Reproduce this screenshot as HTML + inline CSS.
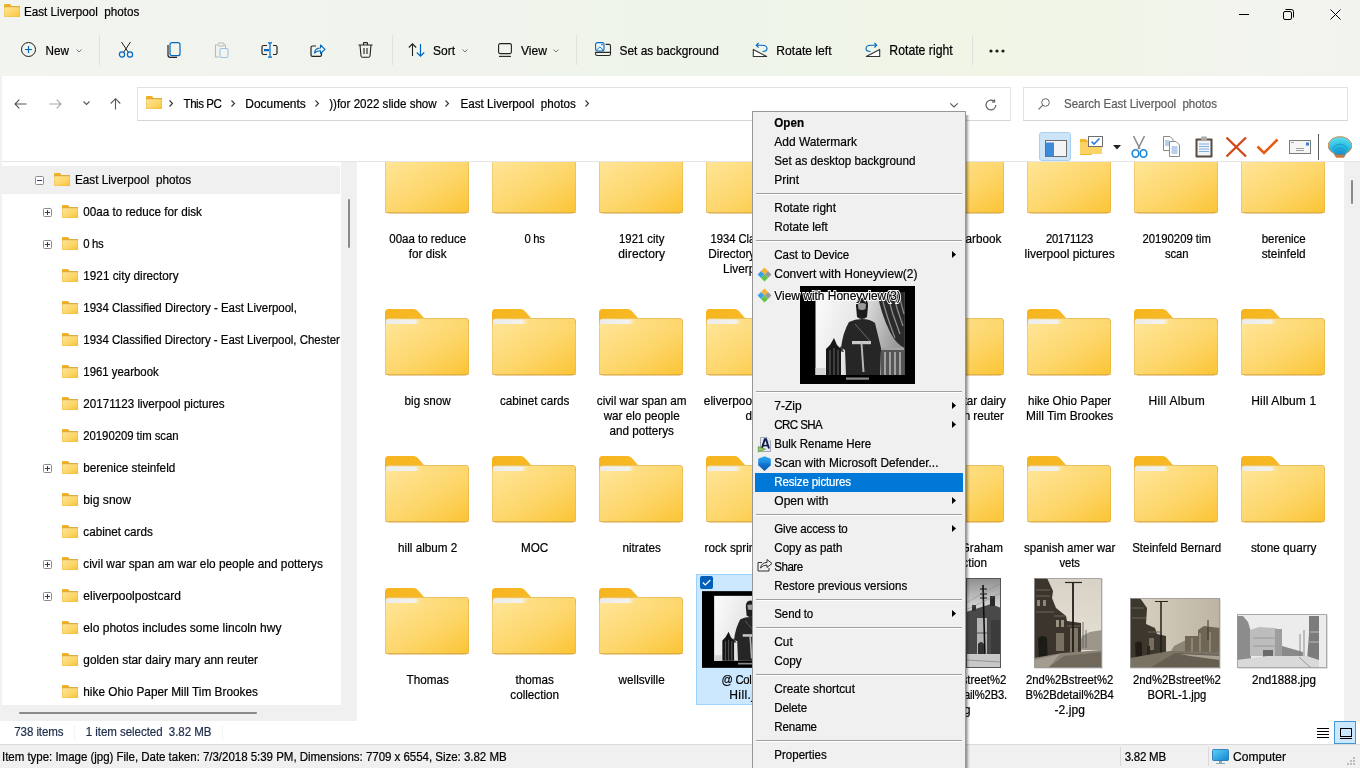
<!DOCTYPE html>
<html><head><meta charset="utf-8"><title>East Liverpool photos</title>
<style>
html,body{margin:0;padding:0;width:1360px;height:768px;overflow:hidden;background:#fff;}
body{position:relative;font-family:"Liberation Sans",sans-serif;}
.t{position:absolute;white-space:pre;font-family:"Liberation Sans",sans-serif;transform:scaleY(1.12);transform-origin:0 14px;-webkit-text-stroke:0.2px currentColor;}
svg{overflow:visible}
</style></head><body>
<svg width="0" height="0" style="position:absolute">
<defs>
<linearGradient id="gFront" x1="0" y1="0" x2="1" y2="1">
<stop offset="0" stop-color="#ffe597"/><stop offset="0.55" stop-color="#fdd66a"/><stop offset="1" stop-color="#fbc435"/>
</linearGradient>
<linearGradient id="gTab" x1="0" y1="0" x2="1" y2="0">
<stop offset="0" stop-color="#f6b51f"/><stop offset="1" stop-color="#f9bd2c"/>
</linearGradient>
<linearGradient id="gPaper" x1="0" y1="0" x2="1" y2="0">
<stop offset="0" stop-color="#ececec"/><stop offset="0.8" stop-color="#f2f2f0"/><stop offset="1" stop-color="#fde59d" stop-opacity="0"/>
</linearGradient>
<symbol id="folder" viewBox="0 0 84 67">
<path d="M3.5,0 H28.5 Q31,0 32.6,1.8 L39,9 H80 V14 H0 V3.5 Q0,0 3.5,0 Z" fill="url(#gTab)"/>
<rect x="0" y="9" width="84" height="57.4" rx="3.8" fill="#d7a443"/>
<rect x="0.6" y="9.5" width="82.8" height="56.2" rx="3.3" fill="url(#gFront)"/>
<path d="M1.2,11.8 Q1.4,10.6 3,10.6 H37 L35,16 H1.2 Z" fill="url(#gPaper)"/>
<path d="M0.6,15 H83.4 V62.4 Q83.4,65.6 80.1,65.6 H3.9 Q0.6,65.6 0.6,62.4 Z" fill="url(#gFront)"/>
<rect x="0" y="65.2" width="84" height="0.9" rx="0.4" fill="#cf9c3c" opacity="0.7"/>
</symbol>
<symbol id="sfolder" viewBox="0 0 16 13">
<path d="M1,0 H6 L7.5,2 H16 V4 H0 V1 Q0,0 1,0 Z" fill="#f1b11d"/>
<rect x="0" y="2" width="16" height="11" rx="1" fill="#e0aa3e"/>
<rect x="0.3" y="3.2" width="15.4" height="9.5" rx="0.8" fill="url(#gFront)"/>
</symbol>

<filter id="soft" x="-5%" y="-5%" width="110%" height="110%"><feGaussianBlur stdDeviation="0.45"/></filter>
<linearGradient id="gSol" x1="0" y1="0" x2="1" y2="0.3">
<stop offset="0" stop-color="#fdfdfd"/><stop offset="0.5" stop-color="#e6e6e6"/><stop offset="1" stop-color="#9a9a9a"/>
</linearGradient>
<symbol id="soldier" viewBox="0 0 115 98">
<rect width="115" height="98" fill="#000"/>
<g filter="url(#soft)">
<rect x="15.5" y="6" width="89" height="83" fill="url(#gSol)"/>
<path d="M77,6 H104.5 V62 Q96,58 90,46 Q81,28 77,6 Z" fill="#2c2c2c"/>
<path d="M81,8 Q87,32 95,52 M87,7 Q92,28 100,48 M93,7 Q97,24 103,40 M99,7 Q101,18 104,28" stroke="#8f8f8f" stroke-width="1.2" fill="none"/>
<rect x="77" y="62" width="27.5" height="27" fill="#555"/>
<path d="M80,66 V89 M85,66 V89 M90,66 V89 M95,66 V89 M100,66 V89" stroke="#c0c0c0" stroke-width="1.4"/>
<path d="M78,63 H104" stroke="#d8d8d8" stroke-width="1.2"/>
<path d="M56,20 Q56,12 62,12 Q68,12 68,20 L67,31 Q62,35 57,31 Z" fill="#1e1e1e"/>
<path d="M58,18 Q62,16 66,18 L65.5,23 Q62,25 58.5,23 Z" fill="#9a9a9a"/>
<path d="M49,36 Q55,33 62,33 Q70,33 75,37 L81,62 L80,89 H46 L45,64 L41,62 Q43,46 49,36 Z" fill="#262626"/>
<path d="M41,60 L38,65 L44,66 Z" fill="#3a3a3a"/>
<rect x="52" y="55" width="19" height="3.2" fill="#c8c8c8"/>
<path d="M61.5,57 L63.5,86" stroke="#b5b5b5" stroke-width="2"/>
<path d="M55,38 L70,55" stroke="#6a6a6a" stroke-width="1"/>
<path d="M34,52 L37,59 L41,63 L41,89 H26 L26,63 L30,59 Z" fill="#181818"/>
<path d="M30,64 V89 M34,62 V89 M38,64 V89" stroke="#7a7a7a" stroke-width="0.8"/>
<rect x="15.5" y="82" width="10" height="7" fill="#d5d5d5"/>
</g>
<rect x="46" y="91.5" width="23" height="2.2" fill="#8a8a8a"/>
</symbol>

<linearGradient id="gSky1" x1="0" y1="0" x2="0" y2="1">
<stop offset="0" stop-color="#d8d2c6"/><stop offset="1" stop-color="#e8e3d9"/>
</linearGradient>
<symbol id="photo7" viewBox="0 0 68 90">
<g filter="url(#soft)">
<rect width="68" height="90" fill="url(#gSky1)"/>
<path d="M48,58 L56,54 L68,52 V72 H44 Z" fill="#9c958a"/>
<path d="M0,0 H13 L19,13 L18,20 L22,30 L32,38 L33,43 L47,45 V75 L30,78 L0,82 Z" fill="#3a352e"/>
<path d="M2,12 H16 M2,18 H16 M2,34 H20 M20,38 H31 M33,48 H46" stroke="#6f6658" stroke-width="1.2"/>
<rect x="3" y="22" width="3" height="6" fill="#8f8676"/><rect x="9" y="22" width="3" height="6" fill="#8f8676"/>
<rect x="22" y="42" width="3" height="7" fill="#9a9180"/><rect x="27" y="42" width="3" height="7" fill="#9a9180"/>
<rect x="22" y="55" width="8" height="18" fill="#786f60"/>
<rect x="36" y="50" width="8" height="24" fill="#7e7566"/>
<path d="M39,4 V74" stroke="#1f1c18" stroke-width="1.8"/><path d="M31,4.5 H48" stroke="#2a2620" stroke-width="1.2"/>
<path d="M49,44 V70 M52,52 V70" stroke="#555" stroke-width="0.8"/>
<path d="M4,60 Q9,56 13,60 L14,87 H5 Z" fill="#1f1c18"/>
<path d="M0,80 L28,75 L68,72 V90 H0 Z" fill="#8a8274"/>
<path d="M30,78 L68,74 V90 H14 Z" fill="#6f675a"/>
<path d="M0,82 L26,76 L14,90 H0 Z" fill="#a49c8e"/>
</g>
<rect x="0.5" y="0.5" width="67" height="89" fill="none" stroke="#9a9a9a" stroke-width="1" opacity="0.8"/>
</symbol>

<linearGradient id="gSky2" x1="0" y1="0" x2="1" y2="0">
<stop offset="0" stop-color="#d9d2c2"/><stop offset="1" stop-color="#bdb4a3"/>
</linearGradient>
<symbol id="photo8" viewBox="0 0 90 70">
<g filter="url(#soft)">
<rect width="90" height="70" fill="url(#gSky2)"/>
<path d="M44,48 L56,42 L90,40 V55 H40 Z" fill="#8d8474"/>
<path d="M55,38 H68 V32 L74,28 L90,30 V56 H55 Z" fill="#6f6656"/>
<path d="M62,40 V55 M70,35 V55 M80,34 V55" stroke="#9a907f" stroke-width="1.5"/>
<path d="M78,22 V42" stroke="#3a342c" stroke-width="1"/>
<path d="M0,0 H10 L17,10 L16,26 L25,30 L27,36 L36,38 V55 L0,62 Z" fill="#3d372f"/>
<path d="M2,10 H14 M2,20 H16 M18,34 H30" stroke="#6e6556" stroke-width="1.1"/>
<rect x="19" y="40" width="5" height="12" fill="#786e5f"/>
<path d="M31,3 V56" stroke="#221e19" stroke-width="1.5"/><path d="M25,3.5 H38" stroke="#2a2620" stroke-width="1"/>
<path d="M5,45 Q9,42 12,45 L12,64 H6 Z" fill="#221e19"/>
<path d="M17,48 L20,48 L20,60 L17,60 Z" fill="#2a2620"/>
<path d="M0,60 L40,53 L90,54 V70 H0 Z" fill="#7a7264"/>
<path d="M20,70 L45,55 L90,57 V70 Z" fill="#665e51"/>
<path d="M50,56 L90,58 V62 L60,58 Z" fill="#aaa192"/>
</g>
<rect x="0.5" y="0.5" width="89" height="69" fill="none" stroke="#9a9a9a" stroke-width="1" opacity="0.8"/>
</symbol>

<linearGradient id="gSky6" x1="0" y1="0" x2="0" y2="1">
<stop offset="0" stop-color="#8e8e8e"/><stop offset="0.3" stop-color="#d0d0d0"/><stop offset="1" stop-color="#e6e6e6"/>
</linearGradient>
<symbol id="photo6" viewBox="0 0 35 90">
<g filter="url(#soft)">
<rect width="35" height="90" fill="url(#gSky6)"/>
<path d="M0,34 L25,26 L35,30 V78 H0 Z" fill="#4a4a4a"/>
<rect x="24" y="18" width="5" height="10" fill="#2a2a2a"/>
<rect x="6" y="27" width="4" height="6" fill="#333"/>
<rect x="11" y="40" width="10" height="36" fill="#b5b5b5"/>
<path d="M11,55 H21" stroke="#555" stroke-width="1"/>
<rect x="25" y="42" width="9" height="34" fill="#3a3a3a"/>
<path d="M17,7 L19,80" stroke="#111" stroke-width="1.6"/>
<path d="M14,11 H21 M14,16 H21 M14,20 H21" stroke="#111" stroke-width="1"/>
<path d="M0,25 L35,5 M0,32 L35,15" stroke="#777" stroke-width="0.4"/>
<path d="M12,66 Q15,62 18,66 V78 H12 Z" fill="#333"/>
<rect x="0" y="76" width="35" height="14" fill="#c8c8c8"/>
<path d="M0,82 L35,84" stroke="#888" stroke-width="0.8"/>
</g>
<rect x="0.5" y="0.5" width="34" height="89" fill="none" stroke="#555" stroke-width="1"/>
</symbol>

<symbol id="photo9" viewBox="0 0 90 54">
<g filter="url(#soft)">
<rect width="90" height="54" fill="#ececec"/>
<path d="M0,2 H6 L11,8 L14,18 V46 L0,48 Z" fill="#8c8c8c"/>
<path d="M13,16 L22,13 L38,14 L44,16 V42 H13 Z" fill="#bdbdbd"/>
<path d="M16,24 H42 M16,32 H42" stroke="#999" stroke-width="1"/>
<rect x="38" y="15" width="7" height="28" fill="#9e9e9e"/>
<path d="M45,32 L52,34 L66,38 V42 H45 Z" fill="#8a8a8a"/>
<path d="M26,36 H36 V44 H26 Z" fill="#6a6a6a"/>
<path d="M72,2 H82 V46 H70 L72,20 Z" fill="#7c7c7c"/>
<path d="M73,18 H82 M72,28 H82" stroke="#bbb" stroke-width="1.2"/>
<path d="M67,16 V44 M63,20 V44" stroke="#777" stroke-width="0.8"/>
<path d="M0,46 L30,42 L70,42 L82,46 V54 H0 Z" fill="#d9d9d9"/>
<path d="M62,43 L74,54" stroke="#999" stroke-width="1"/>
</g>
<rect x="0.5" y="0.5" width="89" height="53" fill="none" stroke="#9a9a9a" stroke-width="1" opacity="0.8"/>
</symbol>
</defs></svg>

<div style="position:absolute;left:0;top:0;width:1360px;height:76px;background:linear-gradient(90deg,#f2f4ef 0%,#f1f4ed 30%,#eef4ea 55%,#f1f5e6 72%,#f1f5e8 82%,#f2f4ee 92%,#f2f3ef 100%);"></div>
<svg style="position:absolute;left:4px;top:4px;" width="16" height="13" viewBox="0 0 16 13"><use href="#sfolder" width="16" height="13"/></svg>
<div class="t" style="left:24.00px;top:2px;font-size:11.67px;line-height:20px;color:#000;">East Liverpool  photos</div>
<div style="position:absolute;left:1239px;top:14px;width:10px;height:1px;background:#000;"></div>
<svg style="position:absolute;left:1283px;top:9px;" width="12" height="11" viewBox="0 0 12 11"><rect x="0.5" y="2.5" width="8" height="8" rx="1.5" fill="none" stroke="#000" stroke-width="1"/><path d="M2.5,0.5 H8.5 Q10.5,0.5 10.5,2.5 V8.5" fill="none" stroke="#000" stroke-width="1"/></svg>
<svg style="position:absolute;left:1330px;top:9px;" width="11" height="11" viewBox="0 0 11 11"><path d="M0.5,0.5 L10.5,10.5 M10.5,0.5 L0.5,10.5" stroke="#000" stroke-width="1"/></svg>
<svg style="position:absolute;left:21px;top:42px;" width="15" height="15" viewBox="0 0 15 15"><circle cx="7.5" cy="7.5" r="7" fill="none" stroke="#1a1a1a" stroke-width="1"/><path d="M7.5,4 V11 M4,7.5 H11" stroke="#0067c0" stroke-width="1.2"/></svg>
<div class="t" style="left:45.50px;top:41px;font-size:11.7px;line-height:20px;color:#000;">New</div>
<svg style="position:absolute;left:76px;top:49px;" width="6" height="4" viewBox="0 0 6 4"><path d="M0.5,0.5 L3,3 L5.5,0.5" fill="none" stroke="#777" stroke-width="1"/></svg>
<div style="position:absolute;left:99px;top:35px;width:1px;height:30px;background:#dfe1dc;"></div>
<svg style="position:absolute;left:118px;top:41px;" width="16" height="17" viewBox="0 0 16 17"><path d="M3.5,1 L10.5,11.5 M12.5,1 L5.5,11.5" stroke="#222" stroke-width="1"/><circle cx="4" cy="13.5" r="2.6" fill="none" stroke="#0067c0" stroke-width="1.2"/><circle cx="12" cy="13.5" r="2.6" fill="none" stroke="#0067c0" stroke-width="1.2"/></svg>
<svg style="position:absolute;left:167px;top:42px;" width="14" height="16" viewBox="0 0 14 16"><rect x="3" y="0.7" width="10" height="13" rx="2" fill="none" stroke="#0067c0" stroke-width="1.2"/><path d="M1,3 V13 Q1,15.3 3.3,15.3 H10" fill="none" stroke="#222" stroke-width="1.2"/></svg>
<svg style="position:absolute;left:214px;top:42px;" width="15" height="16" viewBox="0 0 15 16"><path d="M3,3 H1.5 V15 H5" fill="none" stroke="#b9b9b9" stroke-width="1.1"/><rect x="4" y="1" width="6" height="3" rx="1" fill="none" stroke="#b9b9b9" stroke-width="1"/><path d="M10,3 H11.5 V6" fill="none" stroke="#b9b9b9" stroke-width="1"/><rect x="6" y="6.5" width="8" height="9" rx="1.5" fill="none" stroke="#9cc3e3" stroke-width="1.1"/></svg>
<svg style="position:absolute;left:261px;top:42px;" width="17" height="16" viewBox="0 0 17 16"><path d="M6,3.5 H2.5 Q1,3.5 1,5 V11 Q1,12.5 2.5,12.5 H6 M12,3.5 H14.5 Q16,3.5 16,5 V11 Q16,12.5 14.5,12.5 H12" fill="none" stroke="#222" stroke-width="1.2"/><path d="M9,1 V15 M7,0.8 H11 M7,15.2 H11" stroke="#0067c0" stroke-width="1.2"/><rect x="3" y="7" width="5" height="2.2" fill="#0067c0"/></svg>
<svg style="position:absolute;left:310px;top:43px;" width="16" height="14" viewBox="0 0 16 14"><path d="M6,3 H2.5 Q1,3 1,4.5 V12 Q1,13.3 2.5,13.3 H10 Q11.5,13.3 11.5,12 V10" fill="none" stroke="#222" stroke-width="1.2"/><path d="M4.5,10 Q5,5 10.5,5 V2 L15,6.3 L10.5,10.5 V7.8 Q7,7.8 4.5,10 Z" fill="none" stroke="#0067c0" stroke-width="1.1" stroke-linejoin="round"/></svg>
<svg style="position:absolute;left:358px;top:42px;" width="15" height="16" viewBox="0 0 15 16"><path d="M0.5,3 H14.5 M5.5,3 V1.2 Q5.5,0.6 6.2,0.6 H8.8 Q9.5,0.6 9.5,1.2 V3 M2,3 L3,14 Q3.2,15.3 4.5,15.3 H10.5 Q11.8,15.3 12,14 L13,3 M6,6 V12 M9,6 V12" fill="none" stroke="#222" stroke-width="1.1"/></svg>
<div style="position:absolute;left:392px;top:35px;width:1px;height:30px;background:#dfe1dc;"></div>
<svg style="position:absolute;left:408px;top:43px;" width="18" height="14" viewBox="0 0 18 14"><path d="M4.5,13 V1 M0.8,4.5 L4.5,0.8 L8.2,4.5" fill="none" stroke="#222" stroke-width="1.1"/><path d="M12.5,1 V13 M8.8,9.5 L12.5,13.2 L16.2,9.5" fill="none" stroke="#0067c0" stroke-width="1.2"/></svg>
<div class="t" style="left:433.00px;top:41px;font-size:12.0px;line-height:20px;color:#000;">Sort</div>
<svg style="position:absolute;left:462px;top:49px;" width="6" height="4" viewBox="0 0 6 4"><path d="M0.5,0.5 L3,3 L5.5,0.5" fill="none" stroke="#777" stroke-width="1"/></svg>
<svg style="position:absolute;left:498px;top:43px;" width="14" height="14" viewBox="0 0 14 14"><rect x="0.6" y="0.6" width="12.8" height="10" rx="1.5" fill="none" stroke="#222" stroke-width="1.1"/><path d="M1,13.4 H13" stroke="#222" stroke-width="1.1"/></svg>
<div class="t" style="left:521.00px;top:41px;font-size:12.1px;line-height:20px;color:#000;">View</div>
<svg style="position:absolute;left:553px;top:49px;" width="6" height="4" viewBox="0 0 6 4"><path d="M0.5,0.5 L3,3 L5.5,0.5" fill="none" stroke="#777" stroke-width="1"/></svg>
<div style="position:absolute;left:576px;top:35px;width:1px;height:30px;background:#dfe1dc;"></div>
<svg style="position:absolute;left:594px;top:41px;" width="18" height="16" viewBox="0 0 18 16"><rect x="1.6" y="1.6" width="8.4" height="8.4" rx="2" fill="#eef7ff" stroke="#0067c0" stroke-width="1.1"/><path d="M2.8,8.8 L5.9,5.9 L9,8.8" fill="none" stroke="#0067c0" stroke-width="0.9"/><circle cx="8" cy="3.8" r="0.8" fill="#0067c0"/><path d="M11.6,3.4 H15 Q16.5,3.4 16.5,5 V13 Q16.5,14.5 15,14.5 H3.1 Q1.6,14.5 1.6,13 V10.8 M1.6,11.4 H16.5" fill="none" stroke="#2a2a2a" stroke-width="1.1"/></svg>
<div class="t" style="left:619.50px;top:41px;font-size:11.91px;line-height:20px;color:#000;">Set as background</div>
<svg style="position:absolute;left:752px;top:42px;" width="16" height="16" viewBox="0 0 16 16"><path d="M1.3,7.4 V14.5 H14.7 Z" fill="#fff" stroke="#333" stroke-width="1.1" stroke-linejoin="round"/><path d="M4.3,3.3 H10 Q15,3.3 15,6.5 Q15,9.5 10.5,9.5 M6.6,1 L4.3,3.3 L6.6,5.6" fill="none" stroke="#0067c0" stroke-width="1.1"/></svg>
<div class="t" style="left:776.30px;top:41px;font-size:12.11px;line-height:20px;color:#000;">Rotate left</div>
<svg style="position:absolute;left:865px;top:42px;" width="16" height="16" viewBox="0 0 16 16"><path d="M14.7,7.4 V14.5 H1.3 Z" fill="#fff" stroke="#333" stroke-width="1.1" stroke-linejoin="round"/><path d="M11.7,3.3 H6 Q1,3.3 1,6.5 Q1,9.5 5.5,9.5 M9.4,1 L11.7,3.3 L9.4,5.6" fill="none" stroke="#0067c0" stroke-width="1.1"/></svg>
<div class="t" style="left:889.30px;top:41px;font-size:12.28px;line-height:20px;color:#000;">Rotate right</div>
<div style="position:absolute;left:972px;top:35px;width:1px;height:30px;background:#dfe1dc;"></div>
<svg style="position:absolute;left:989px;top:49px;" width="4" height="4" viewBox="0 0 4 4"><circle cx="2" cy="2" r="1.6" fill="#1a1a1a"/></svg>
<svg style="position:absolute;left:995px;top:49px;" width="4" height="4" viewBox="0 0 4 4"><circle cx="2" cy="2" r="1.6" fill="#1a1a1a"/></svg>
<svg style="position:absolute;left:1001px;top:49px;" width="4" height="4" viewBox="0 0 4 4"><circle cx="2" cy="2" r="1.6" fill="#1a1a1a"/></svg>
<div style="position:absolute;left:0px;top:76px;width:2px;height:692px;background:#f1f1f1;"></div>
<svg style="position:absolute;left:14px;top:99px;" width="13" height="10" viewBox="0 0 13 10"><path d="M12.5,5 H1 M5.3,0.7 L1,5 L5.3,9.3" fill="none" stroke="#555" stroke-width="1.1"/></svg>
<svg style="position:absolute;left:49px;top:99px;" width="13" height="10" viewBox="0 0 13 10"><path d="M0.5,5 H12 M7.7,0.7 L12,5 L7.7,9.3" fill="none" stroke="#a6a6a6" stroke-width="1.1"/></svg>
<svg style="position:absolute;left:83px;top:101px;" width="7" height="4" viewBox="0 0 7 4"><path d="M0.5,0.5 L3.5,3.5 L6.5,0.5" fill="none" stroke="#555" stroke-width="1.1"/></svg>
<svg style="position:absolute;left:110px;top:98px;" width="11" height="12" viewBox="0 0 11 12"><path d="M5.5,11.5 V1 M0.7,5.5 L5.5,0.7 L10.3,5.5" fill="none" stroke="#555" stroke-width="1.1"/></svg>
<div style="position:absolute;left:137px;top:87px;width:874px;height:34px;background:#fff;box-sizing:border-box;border:1px solid #e2e2e2;border-bottom-color:#d6d6d6"></div>
<svg style="position:absolute;left:146px;top:96px;" width="16" height="13" viewBox="0 0 16 13"><use href="#sfolder" width="16" height="13"/></svg>
<svg style="position:absolute;left:169px;top:100px;" width="4" height="7" viewBox="0 0 4 7"><path d="M0.5,0.5 L3.5,3.5 L0.5,6.5" fill="none" stroke="#333" stroke-width="1.1"/></svg>
<div class="t" style="left:183.60px;top:94px;font-size:11.55px;line-height:20px;color:#000;letter-spacing:-0.479px;">This PC</div>
<svg style="position:absolute;left:231px;top:100px;" width="4" height="7" viewBox="0 0 4 7"><path d="M0.5,0.5 L3.5,3.5 L0.5,6.5" fill="none" stroke="#333" stroke-width="1.1"/></svg>
<div class="t" style="left:245.30px;top:94px;font-size:11.96px;line-height:20px;color:#000;">Documents</div>
<svg style="position:absolute;left:315px;top:100px;" width="4" height="7" viewBox="0 0 4 7"><path d="M0.5,0.5 L3.5,3.5 L0.5,6.5" fill="none" stroke="#333" stroke-width="1.1"/></svg>
<div class="t" style="left:329.20px;top:94px;font-size:11.59px;line-height:20px;color:#000;">))for 2022 slide show</div>
<svg style="position:absolute;left:445px;top:100px;" width="4" height="7" viewBox="0 0 4 7"><path d="M0.5,0.5 L3.5,3.5 L0.5,6.5" fill="none" stroke="#333" stroke-width="1.1"/></svg>
<div class="t" style="left:460.50px;top:94px;font-size:11.66px;line-height:20px;color:#000;">East Liverpool  photos</div>
<svg style="position:absolute;left:585px;top:100px;" width="4" height="7" viewBox="0 0 4 7"><path d="M0.5,0.5 L3.5,3.5 L0.5,6.5" fill="none" stroke="#333" stroke-width="1.1"/></svg>
<svg style="position:absolute;left:950px;top:103px;" width="8" height="5" viewBox="0 0 8 5"><path d="M0.3,0.3 L4,4 L7.7,0.3" fill="none" stroke="#555" stroke-width="1.1"/></svg>
<svg style="position:absolute;left:985px;top:99px;" width="12" height="12" viewBox="0 0 12 12"><path d="M10.8,6 A4.9,4.9 0 1 1 9,2.2" fill="none" stroke="#555" stroke-width="1.1"/><path d="M9.6,0.4 V3 H7" fill="none" stroke="#555" stroke-width="1.1"/></svg>
<div style="position:absolute;left:1023px;top:87px;width:325px;height:34px;background:#fff;box-sizing:border-box;border:1px solid #e2e2e2;border-bottom-color:#d6d6d6"></div>
<svg style="position:absolute;left:1038px;top:98px;" width="12" height="12" viewBox="0 0 12 12"><circle cx="7.5" cy="4.5" r="3.8" fill="none" stroke="#666" stroke-width="1"/><path d="M4.8,7.2 L0.6,11.4" stroke="#666" stroke-width="1.1"/></svg>
<div class="t" style="left:1064.00px;top:94px;font-size:11.55px;line-height:20px;color:#5d5d5d;letter-spacing:-0.039px;">Search East Liverpool  photos</div>
<div style="position:absolute;left:2px;top:161px;width:1358px;height:1px;background:#e5e5e5;"></div>
<div style="position:absolute;left:341px;top:162px;width:16px;height:559px;background:#f0f0f0;"></div>
<div style="position:absolute;left:348px;top:199px;width:2px;height:49px;background:#8a8a8a;border-radius:1px"></div>
<div style="position:absolute;left:2px;top:705px;width:355px;height:16px;background:#f0f0f0;"></div>
<div style="position:absolute;left:19px;top:712px;width:238px;height:2px;background:#8a8a8a;border-radius:1px"></div>
<div style="position:absolute;left:2px;top:166px;width:338px;height:28px;background:#f0f0f0;"></div>
<svg style="position:absolute;left:35px;top:176px;" width="9" height="9" viewBox="0 0 9 9"><rect x="0.5" y="0.5" width="8" height="8" rx="1" fill="#fff" stroke="#8c8c8c" stroke-width="1"/><path d="M2,4.5 H7" stroke="#2c3e60" stroke-width="1"/></svg>
<svg style="position:absolute;left:54px;top:173px;" width="16" height="13" viewBox="0 0 16 13"><use href="#sfolder" width="16" height="13"/></svg>
<div class="t" style="left:75.00px;top:170px;font-size:11.74px;line-height:20px;color:#000;">East Liverpool  photos</div>
<div style="position:absolute;left:2px;top:195px;width:339px;height:510px;overflow:hidden">
<svg style="position:absolute;left:41px;top:13px;" width="9" height="9" viewBox="0 0 9 9"><rect x="0.5" y="0.5" width="8" height="8" rx="1" fill="#fff" stroke="#8c8c8c" stroke-width="1"/><path d="M2,4.5 H7" stroke="#2c3e60" stroke-width="1"/><path d="M4.5,2 V7" stroke="#2c3e60" stroke-width="1"/></svg>
<svg style="position:absolute;left:60px;top:10px;" width="16" height="13" viewBox="0 0 16 13"><use href="#sfolder" width="16" height="13"/></svg>
<div class="t" style="left:81.30px;top:7px;font-size:11.67px;line-height:20px;color:#000;">00aa to reduce for disk</div>
<svg style="position:absolute;left:41px;top:45px;" width="9" height="9" viewBox="0 0 9 9"><rect x="0.5" y="0.5" width="8" height="8" rx="1" fill="#fff" stroke="#8c8c8c" stroke-width="1"/><path d="M2,4.5 H7" stroke="#2c3e60" stroke-width="1"/><path d="M4.5,2 V7" stroke="#2c3e60" stroke-width="1"/></svg>
<svg style="position:absolute;left:60px;top:42px;" width="16" height="13" viewBox="0 0 16 13"><use href="#sfolder" width="16" height="13"/></svg>
<div class="t" style="left:81.30px;top:39px;font-size:11.35px;line-height:20px;color:#000;letter-spacing:-0.317px;">0 hs</div>
<svg style="position:absolute;left:60px;top:74px;" width="16" height="13" viewBox="0 0 16 13"><use href="#sfolder" width="16" height="13"/></svg>
<div class="t" style="left:81.30px;top:71px;font-size:11.74px;line-height:20px;color:#000;">1921 city directory</div>
<svg style="position:absolute;left:60px;top:106px;" width="16" height="13" viewBox="0 0 16 13"><use href="#sfolder" width="16" height="13"/></svg>
<div class="t" style="left:81.30px;top:103px;font-size:11.48px;line-height:20px;color:#000;">1934 Classified Directory - East Liverpool,</div>
<svg style="position:absolute;left:60px;top:138px;" width="16" height="13" viewBox="0 0 16 13"><use href="#sfolder" width="16" height="13"/></svg>
<div class="t" style="left:81.30px;top:135px;font-size:11.46px;line-height:20px;color:#000;">1934 Classified Directory - East Liverpool, Chester</div>
<svg style="position:absolute;left:60px;top:170px;" width="16" height="13" viewBox="0 0 16 13"><use href="#sfolder" width="16" height="13"/></svg>
<div class="t" style="left:81.30px;top:167px;font-size:11.4px;line-height:20px;color:#000;">1961 yearbook</div>
<svg style="position:absolute;left:60px;top:202px;" width="16" height="13" viewBox="0 0 16 13"><use href="#sfolder" width="16" height="13"/></svg>
<div class="t" style="left:81.30px;top:199px;font-size:11.64px;line-height:20px;color:#000;">20171123 liverpool pictures</div>
<svg style="position:absolute;left:60px;top:234px;" width="16" height="13" viewBox="0 0 16 13"><use href="#sfolder" width="16" height="13"/></svg>
<div class="t" style="left:81.30px;top:231px;font-size:11.35px;line-height:20px;color:#000;letter-spacing:-0.038px;">20190209 tim scan</div>
<svg style="position:absolute;left:41px;top:269px;" width="9" height="9" viewBox="0 0 9 9"><rect x="0.5" y="0.5" width="8" height="8" rx="1" fill="#fff" stroke="#8c8c8c" stroke-width="1"/><path d="M2,4.5 H7" stroke="#2c3e60" stroke-width="1"/><path d="M4.5,2 V7" stroke="#2c3e60" stroke-width="1"/></svg>
<svg style="position:absolute;left:60px;top:266px;" width="16" height="13" viewBox="0 0 16 13"><use href="#sfolder" width="16" height="13"/></svg>
<div class="t" style="left:81.30px;top:263px;font-size:11.74px;line-height:20px;color:#000;">berenice steinfeld</div>
<svg style="position:absolute;left:60px;top:298px;" width="16" height="13" viewBox="0 0 16 13"><use href="#sfolder" width="16" height="13"/></svg>
<div class="t" style="left:81.30px;top:295px;font-size:12.11px;line-height:20px;color:#000;">big snow</div>
<svg style="position:absolute;left:60px;top:330px;" width="16" height="13" viewBox="0 0 16 13"><use href="#sfolder" width="16" height="13"/></svg>
<div class="t" style="left:81.30px;top:327px;font-size:11.7px;line-height:20px;color:#000;">cabinet cards</div>
<svg style="position:absolute;left:41px;top:365px;" width="9" height="9" viewBox="0 0 9 9"><rect x="0.5" y="0.5" width="8" height="8" rx="1" fill="#fff" stroke="#8c8c8c" stroke-width="1"/><path d="M2,4.5 H7" stroke="#2c3e60" stroke-width="1"/><path d="M4.5,2 V7" stroke="#2c3e60" stroke-width="1"/></svg>
<svg style="position:absolute;left:60px;top:362px;" width="16" height="13" viewBox="0 0 16 13"><use href="#sfolder" width="16" height="13"/></svg>
<div class="t" style="left:81.30px;top:359px;font-size:11.85px;line-height:20px;color:#000;">civil war span am war elo people and potterys</div>
<svg style="position:absolute;left:41px;top:397px;" width="9" height="9" viewBox="0 0 9 9"><rect x="0.5" y="0.5" width="8" height="8" rx="1" fill="#fff" stroke="#8c8c8c" stroke-width="1"/><path d="M2,4.5 H7" stroke="#2c3e60" stroke-width="1"/><path d="M4.5,2 V7" stroke="#2c3e60" stroke-width="1"/></svg>
<svg style="position:absolute;left:60px;top:394px;" width="16" height="13" viewBox="0 0 16 13"><use href="#sfolder" width="16" height="13"/></svg>
<div class="t" style="left:81.30px;top:391px;font-size:12.03px;line-height:20px;color:#000;">eliverpoolpostcard</div>
<svg style="position:absolute;left:60px;top:426px;" width="16" height="13" viewBox="0 0 16 13"><use href="#sfolder" width="16" height="13"/></svg>
<div class="t" style="left:81.30px;top:423px;font-size:12.06px;line-height:20px;color:#000;">elo photos includes some lincoln hwy</div>
<svg style="position:absolute;left:60px;top:458px;" width="16" height="13" viewBox="0 0 16 13"><use href="#sfolder" width="16" height="13"/></svg>
<div class="t" style="left:81.30px;top:455px;font-size:11.86px;line-height:20px;color:#000;">golden star dairy mary ann reuter</div>
<svg style="position:absolute;left:60px;top:490px;" width="16" height="13" viewBox="0 0 16 13"><use href="#sfolder" width="16" height="13"/></svg>
<div class="t" style="left:81.30px;top:487px;font-size:11.82px;line-height:20px;color:#000;">hike Ohio Paper Mill Tim Brookes</div>
</div>
<div style="position:absolute;left:1344px;top:162px;width:16px;height:559px;background:#f0f0f0;"></div>
<div style="position:absolute;left:1351px;top:180px;width:2px;height:24px;background:#8a8a8a;border-radius:1px"></div>
<div style="position:absolute;left:357px;top:162px;width:987px;height:559px;overflow:hidden">
<svg style="position:absolute;left:28px;top:-15px;" width="84" height="67" viewBox="0 0 84 67"><use href="#folder" width="84" height="67"/></svg>
<div class="t" style="left:32.25px;top:67px;font-size:11.53px;line-height:20px;color:#000;">00aa to reduce</div>
<div class="t" style="left:51.85px;top:82px;font-size:11.7px;line-height:20px;color:#000;">for disk</div>
<svg style="position:absolute;left:135px;top:-15px;" width="84" height="67" viewBox="0 0 84 67"><use href="#folder" width="84" height="67"/></svg>
<div class="t" style="left:167.50px;top:67px;font-size:11.25px;line-height:20px;color:#000;letter-spacing:-0.288px;">0 hs</div>
<svg style="position:absolute;left:242px;top:-15px;" width="84" height="67" viewBox="0 0 84 67"><use href="#folder" width="84" height="67"/></svg>
<div class="t" style="left:262.05px;top:67px;font-size:11.32px;line-height:20px;color:#000;">1921 city</div>
<div class="t" style="left:261.35px;top:82px;font-size:12.05px;line-height:20px;color:#000;letter-spacing:0.062px;">directory</div>
<svg style="position:absolute;left:349px;top:-15px;" width="84" height="67" viewBox="0 0 84 67"><use href="#folder" width="84" height="67"/></svg>
<div class="t" style="left:353.50px;top:67px;font-size:11.25px;line-height:20px;color:#000;letter-spacing:-0.037px;">1934 Classified</div>
<div class="t" style="left:351.30px;top:82px;font-size:11.73px;line-height:20px;color:#000;">Directory - East</div>
<div class="t" style="left:366.10px;top:97px;font-size:11.81px;line-height:20px;color:#000;">Liverpool,</div>
<svg style="position:absolute;left:456px;top:-15px;" width="84" height="67" viewBox="0 0 84 67"><use href="#folder" width="84" height="67"/></svg>
<div class="t" style="left:460.50px;top:67px;font-size:11.25px;line-height:20px;color:#000;letter-spacing:-0.037px;">1934 Classified</div>
<div class="t" style="left:458.30px;top:82px;font-size:11.73px;line-height:20px;color:#000;">Directory - East</div>
<div class="t" style="left:473.10px;top:97px;font-size:11.81px;line-height:20px;color:#000;">Liverpool,</div>
<svg style="position:absolute;left:563px;top:-15px;" width="84" height="67" viewBox="0 0 84 67"><use href="#folder" width="84" height="67"/></svg>
<div class="t" style="left:567.00px;top:67px;font-size:11.7px;line-height:20px;color:#000;">1961 yearbook</div>
<svg style="position:absolute;left:670px;top:-15px;" width="84" height="67" viewBox="0 0 84 67"><use href="#folder" width="84" height="67"/></svg>
<div class="t" style="left:689.05px;top:67px;font-size:11.25px;line-height:20px;color:#000;letter-spacing:-0.273px;">20171123</div>
<div class="t" style="left:667.60px;top:82px;font-size:12.02px;line-height:20px;color:#000;">liverpool pictures</div>
<svg style="position:absolute;left:777px;top:-15px;" width="84" height="67" viewBox="0 0 84 67"><use href="#folder" width="84" height="67"/></svg>
<div class="t" style="left:785.45px;top:67px;font-size:11.3px;line-height:20px;color:#000;">20190209 tim</div>
<div class="t" style="left:807.95px;top:82px;font-size:11.25px;line-height:20px;color:#000;letter-spacing:-0.087px;">scan</div>
<svg style="position:absolute;left:884px;top:-15px;" width="84" height="67" viewBox="0 0 84 67"><use href="#folder" width="84" height="67"/></svg>
<div class="t" style="left:904.70px;top:67px;font-size:11.47px;line-height:20px;color:#000;">berenice</div>
<div class="t" style="left:904.70px;top:82px;font-size:11.81px;line-height:20px;color:#000;">steinfeld</div>
<svg style="position:absolute;left:28px;top:147px;" width="84" height="67" viewBox="0 0 84 67"><use href="#folder" width="84" height="67"/></svg>
<div class="t" style="left:47.61px;top:229px;font-size:11.7px;line-height:20px;color:#000;">big snow</div>
<svg style="position:absolute;left:135px;top:147px;" width="84" height="67" viewBox="0 0 84 67"><use href="#folder" width="84" height="67"/></svg>
<div class="t" style="left:142.91px;top:229px;font-size:11.7px;line-height:20px;color:#000;">cabinet cards</div>
<svg style="position:absolute;left:242px;top:147px;" width="84" height="67" viewBox="0 0 84 67"><use href="#folder" width="84" height="67"/></svg>
<div class="t" style="left:239.84px;top:229px;font-size:11.7px;line-height:20px;color:#000;">civil war span am</div>
<div class="t" style="left:246.65px;top:244px;font-size:11.7px;line-height:20px;color:#000;">war elo people</div>
<div class="t" style="left:252.51px;top:259px;font-size:11.7px;line-height:20px;color:#000;">and potterys</div>
<svg style="position:absolute;left:349px;top:147px;" width="84" height="67" viewBox="0 0 84 67"><use href="#folder" width="84" height="67"/></svg>
<div class="t" style="left:346.80px;top:229px;font-size:11.88px;line-height:20px;color:#000;">eliverpoolpostcar</div>
<div class="t" style="left:388.45px;top:244px;font-size:11.7px;line-height:20px;color:#000;">d</div>
<svg style="position:absolute;left:456px;top:147px;" width="84" height="67" viewBox="0 0 84 67"><use href="#folder" width="84" height="67"/></svg>
<div class="t" style="left:471.71px;top:229px;font-size:11.7px;line-height:20px;color:#000;">elo photos</div>
<div class="t" style="left:461.31px;top:244px;font-size:11.7px;line-height:20px;color:#000;">includes some</div>
<div class="t" style="left:470.09px;top:259px;font-size:11.7px;line-height:20px;color:#000;">lincoln hwy</div>
<svg style="position:absolute;left:563px;top:147px;" width="84" height="67" viewBox="0 0 84 67"><use href="#folder" width="84" height="67"/></svg>
<div class="t" style="left:562.45px;top:229px;font-size:11.7px;line-height:20px;color:#000;">golden star dairy</div>
<div class="t" style="left:564.41px;top:244px;font-size:11.7px;line-height:20px;color:#000;">mary ann reuter</div>
<svg style="position:absolute;left:670px;top:147px;" width="84" height="67" viewBox="0 0 84 67"><use href="#folder" width="84" height="67"/></svg>
<div class="t" style="left:671.10px;top:229px;font-size:11.6px;line-height:20px;color:#000;">hike Ohio Paper</div>
<div class="t" style="left:669.00px;top:244px;font-size:11.92px;line-height:20px;color:#000;">Mill Tim Brookes</div>
<svg style="position:absolute;left:777px;top:147px;" width="84" height="67" viewBox="0 0 84 67"><use href="#folder" width="84" height="67"/></svg>
<div class="t" style="left:791.55px;top:229px;font-size:12.05px;line-height:20px;color:#000;letter-spacing:0.303px;">Hill Album</div>
<svg style="position:absolute;left:884px;top:147px;" width="84" height="67" viewBox="0 0 84 67"><use href="#folder" width="84" height="67"/></svg>
<div class="t" style="left:894.30px;top:229px;font-size:12.05px;line-height:20px;color:#000;letter-spacing:0.107px;">Hill Album 1</div>
<svg style="position:absolute;left:28px;top:294px;" width="84" height="67" viewBox="0 0 84 67"><use href="#folder" width="84" height="67"/></svg>
<div class="t" style="left:41.11px;top:376px;font-size:11.7px;line-height:20px;color:#000;">hill album 2</div>
<svg style="position:absolute;left:135px;top:294px;" width="84" height="67" viewBox="0 0 84 67"><use href="#folder" width="84" height="67"/></svg>
<div class="t" style="left:164.05px;top:376px;font-size:11.7px;line-height:20px;color:#000;">MOC</div>
<svg style="position:absolute;left:242px;top:294px;" width="84" height="67" viewBox="0 0 84 67"><use href="#folder" width="84" height="67"/></svg>
<div class="t" style="left:265.52px;top:376px;font-size:11.7px;line-height:20px;color:#000;">nitrates</div>
<svg style="position:absolute;left:349px;top:294px;" width="84" height="67" viewBox="0 0 84 67"><use href="#folder" width="84" height="67"/></svg>
<div class="t" style="left:347.60px;top:376px;font-size:11.7px;line-height:20px;color:#000;">rock springs pottery</div>
<svg style="position:absolute;left:456px;top:294px;" width="84" height="67" viewBox="0 0 84 67"><use href="#folder" width="84" height="67"/></svg>
<div class="t" style="left:486.34px;top:376px;font-size:11.7px;line-height:20px;color:#000;">Ruth</div>
<svg style="position:absolute;left:563px;top:294px;" width="84" height="67" viewBox="0 0 84 67"><use href="#folder" width="84" height="67"/></svg>
<div class="t" style="left:565.39px;top:376px;font-size:11.7px;line-height:20px;color:#000;">Robert Graham</div>
<div class="t" style="left:581.31px;top:391px;font-size:11.7px;line-height:20px;color:#000;">collection</div>
<svg style="position:absolute;left:670px;top:294px;" width="84" height="67" viewBox="0 0 84 67"><use href="#folder" width="84" height="67"/></svg>
<div class="t" style="left:667.00px;top:376px;font-size:11.58px;line-height:20px;color:#000;">spanish amer war</div>
<div class="t" style="left:702.60px;top:391px;font-size:11.25px;line-height:20px;color:#000;letter-spacing:-0.144px;">vets</div>
<svg style="position:absolute;left:777px;top:294px;" width="84" height="67" viewBox="0 0 84 67"><use href="#folder" width="84" height="67"/></svg>
<div class="t" style="left:775.15px;top:376px;font-size:11.53px;line-height:20px;color:#000;">Steinfeld Bernard</div>
<svg style="position:absolute;left:884px;top:294px;" width="84" height="67" viewBox="0 0 84 67"><use href="#folder" width="84" height="67"/></svg>
<div class="t" style="left:893.90px;top:376px;font-size:11.8px;line-height:20px;color:#000;">stone quarry</div>
<svg style="position:absolute;left:28px;top:426px;" width="84" height="67" viewBox="0 0 84 67"><use href="#folder" width="84" height="67"/></svg>
<div class="t" style="left:49.57px;top:508px;font-size:11.7px;line-height:20px;color:#000;">Thomas</div>
<svg style="position:absolute;left:135px;top:426px;" width="84" height="67" viewBox="0 0 84 67"><use href="#folder" width="84" height="67"/></svg>
<div class="t" style="left:158.52px;top:508px;font-size:11.7px;line-height:20px;color:#000;">thomas</div>
<div class="t" style="left:153.31px;top:523px;font-size:11.7px;line-height:20px;color:#000;">collection</div>
<svg style="position:absolute;left:242px;top:426px;" width="84" height="67" viewBox="0 0 84 67"><use href="#folder" width="84" height="67"/></svg>
<div class="t" style="left:261.62px;top:508px;font-size:11.7px;line-height:20px;color:#000;">wellsville</div>
<div style="position:absolute;left:339px;top:412px;width:100px;height:131px;background:#cce8ff;box-sizing:border-box;border:1px solid #99d1ff"></div>
<div style="position:absolute;left:343px;top:414px;width:13px;height:13px;background:#005fb8;border-radius:2px"></div>
<svg style="position:absolute;left:345px;top:417px;" width="9" height="7" viewBox="0 0 9 7"><path d="M0.8,3.5 L3.3,6 L8.3,1" fill="none" stroke="#fff" stroke-width="1.2"/></svg>
<svg style="position:absolute;left:345px;top:429px;" width="90" height="77" viewBox="0 0 90 77"><use href="#soldier" width="90" height="77"/></svg>
<div class="t" style="left:364.40px;top:508px;font-size:11.25px;line-height:20px;color:#000;letter-spacing:-0.241px;">@ Col H R</div>
<div class="t" style="left:372.20px;top:523px;font-size:12.05px;line-height:20px;color:#000;letter-spacing:0.406px;">Hill.jpg</div>
<svg style="position:absolute;left:609px;top:416px;" width="35" height="90" viewBox="0 0 35 90"><use href="#photo6" width="35" height="90"/></svg>
<div style="position:absolute;left:678px;top:417px;width:68px;height:90px;background:rgba(0,0,0,0.12);"></div>
<svg style="position:absolute;left:677px;top:416px;" width="68" height="90" viewBox="0 0 68 90"><use href="#photo7" width="68" height="90"/></svg>
<div style="position:absolute;left:774px;top:437px;width:90px;height:70px;background:rgba(0,0,0,0.12);"></div>
<svg style="position:absolute;left:773px;top:436px;" width="90" height="70" viewBox="0 0 90 70"><use href="#photo8" width="90" height="70"/></svg>
<div style="position:absolute;left:881px;top:453px;width:90px;height:54px;background:rgba(0,0,0,0.12);"></div>
<svg style="position:absolute;left:880px;top:452px;" width="90" height="54" viewBox="0 0 90 54"><use href="#photo9" width="90" height="54"/></svg>
<div class="t" style="left:561.95px;top:508px;font-size:11.32px;line-height:20px;color:#000;">2nd%2Bstreet%2</div>
<div class="t" style="left:561.20px;top:523px;font-size:11.25px;line-height:20px;color:#000;letter-spacing:-0.165px;">B%2Bdetail%2B3.</div>
<div class="t" style="left:597.89px;top:538px;font-size:11.7px;line-height:20px;color:#000;">jpg</div>
<div class="t" style="left:669.05px;top:508px;font-size:11.3px;line-height:20px;color:#000;">2nd%2Bstreet%2</div>
<div class="t" style="left:668.60px;top:523px;font-size:11.25px;line-height:20px;color:#000;">B%2Bdetail%2B4</div>
<div class="t" style="left:697.55px;top:538px;font-size:12.05px;line-height:20px;color:#000;letter-spacing:0.032px;">-2.jpg</div>
<div class="t" style="left:775.95px;top:508px;font-size:11.38px;line-height:20px;color:#000;">2nd%2Bstreet%2</div>
<div class="t" style="left:790.45px;top:523px;font-size:11.27px;line-height:20px;color:#000;">BORL-1.jpg</div>
<div class="t" style="left:894.95px;top:508px;font-size:11.61px;line-height:20px;color:#000;">2nd1888.jpg</div>
</div>
<div style="position:absolute;left:1039px;top:132px;width:32px;height:29px;background:#cce4f7;box-sizing:border-box;border:1px solid #a8d0f0;border-radius:3px"></div>
<svg style="position:absolute;left:1045px;top:140px;" width="22" height="17" viewBox="0 0 22 17"><rect x="0.5" y="0.5" width="21" height="16" fill="#f4f4f4" stroke="#6d6d6d"/><rect x="1" y="2.5" width="8" height="14" fill="#3c8ad9"/></svg>
<svg style="position:absolute;left:1080px;top:136px;" width="23" height="19" viewBox="0 0 23 19"><path d="M0,3 H6 L7,4.5 H12 V19 H0 Z" fill="#f3b52c"/><rect x="0" y="6" width="22" height="12" fill="#fbd364"/><rect x="8.5" y="0.5" width="14" height="10" fill="#fff" stroke="#6d6d6d"/><path d="M11.5,5.5 L14,8 L19.5,2.5" fill="none" stroke="#2a7bd2" stroke-width="1.6"/></svg>
<svg style="position:absolute;left:1113px;top:145px;" width="8" height="5" viewBox="0 0 8 5"><path d="M0,0 H8 L4,4.5 Z" fill="#222"/></svg>
<svg style="position:absolute;left:1131px;top:136px;" width="17" height="22" viewBox="0 0 17 22"><path d="M2.5,0 L9,13 M13.5,0 L7,13" stroke="#8c8c8c" stroke-width="1.6"/><ellipse cx="4.5" cy="17.5" rx="3.3" ry="3.8" fill="none" stroke="#1a87d6" stroke-width="1.6"/><ellipse cx="12.5" cy="17.5" rx="3.3" ry="3.8" fill="none" stroke="#1a87d6" stroke-width="1.6"/></svg>
<svg style="position:absolute;left:1163px;top:136px;" width="18" height="21" viewBox="0 0 18 21"><path d="M0.5,0.5 H7 L10,3.5 V14.5 H0.5 Z" fill="#fff" stroke="#8a8a8a"/><path d="M6.5,5.5 H13 L16.5,9 V20.5 H6.5 Z" fill="#fff" stroke="#8a8a8a"/><path d="M8.5,11 H14.5 M8.5,13 H14.5 M8.5,15 H14.5 M8.5,17 H14.5 M2,5 H6 M2,7 H6 M2,9 H6" stroke="#4a8ad2" stroke-width="0.8"/></svg>
<svg style="position:absolute;left:1195px;top:136px;" width="18" height="22" viewBox="0 0 18 22"><rect x="0.5" y="2.5" width="17" height="19" fill="#5b4a3b" rx="1"/><rect x="2.5" y="4.5" width="13" height="15" fill="#eef4fa"/><path d="M4,8 H14 M4,10.5 H14 M4,13 H14 M4,15.5 H14" stroke="#6aa0d6" stroke-width="0.8"/><rect x="6" y="0.5" width="6" height="4" rx="1" fill="#aaa"/></svg>
<svg style="position:absolute;left:1225px;top:136px;" width="23" height="22" viewBox="0 0 23 22"><path d="M1.5,1.5 L21,20.5 M21,1.5 L1.5,20.5" stroke="#d24a1b" stroke-width="2.4"/></svg>
<svg style="position:absolute;left:1256px;top:138px;" width="23" height="18" viewBox="0 0 23 18"><path d="M1.5,8.5 L8,15 L21.5,1.5" fill="none" stroke="#e65c14" stroke-width="2.6"/></svg>
<svg style="position:absolute;left:1289px;top:140px;" width="22" height="14" viewBox="0 0 22 14"><rect x="0.5" y="0.5" width="21" height="13" fill="#f6f6f6" stroke="#7a7a7a"/><rect x="17" y="2.5" width="3" height="3" fill="#3a7fd0"/><path d="M7,8.5 H15 M7,10.5 H15 M2,2.5 H5" stroke="#8a8a8a" stroke-width="0.8"/></svg>
<div style="position:absolute;left:1318px;top:134px;width:1px;height:26px;background:#5a5a5a;"></div>
<svg style="position:absolute;left:1328px;top:136px;" width="24" height="22" viewBox="0 0 24 22"><defs><radialGradient id="gShell" cx="0.5" cy="0.95" r="0.95"><stop offset="0" stop-color="#1a7fc6"/><stop offset="0.45" stop-color="#22b4dc"/><stop offset="1" stop-color="#5fe0f0"/></radialGradient></defs><path d="M12,0.8 Q15,0.3 17,1.8 Q20,2 21.5,4.5 Q23.8,6.5 23.5,9.5 Q24,12.5 22,14.5 L18,17.5 L16,21 H8 L6,17.5 L2,14.5 Q0,12.5 0.5,9.5 Q0.2,6.5 2.5,4.5 Q4,2 7,1.8 Q9,0.3 12,0.8 Z" fill="url(#gShell)" stroke="#d9874e" stroke-width="1"/><path d="M4,13 Q12,3 20,13 M6.5,15.5 Q12,8 17.5,15.5 M9,18 Q12,13 15,18" fill="none" stroke="#1b8fd0" stroke-width="1" opacity="0.8"/><rect x="8" y="18.5" width="8" height="3" fill="#c27a45"/></svg>
<div style="position:absolute;left:0px;top:721px;width:1360px;height:23px;background:#fff;"></div>
<div class="t" style="left:14.30px;top:722px;font-size:11.55px;line-height:20px;color:#1f2d4a;letter-spacing:-0.096px;">738 items</div>
<div style="position:absolute;left:74px;top:725px;width:1px;height:15px;background:#f4f4f4;"></div>
<div class="t" style="left:85.80px;top:722px;font-size:11.55px;line-height:20px;color:#1f2d4a;letter-spacing:-0.061px;">1 item selected  3.82 MB</div>
<div style="position:absolute;left:222px;top:725px;width:1px;height:15px;background:#f4f4f4;"></div>
<div style="position:absolute;left:1317px;top:728px;width:12px;height:1px;background:#000;"></div>
<div style="position:absolute;left:1317px;top:731px;width:12px;height:1px;background:#000;"></div>
<div style="position:absolute;left:1317px;top:734px;width:12px;height:1px;background:#000;"></div>
<div style="position:absolute;left:1317px;top:737px;width:12px;height:1px;background:#000;"></div>
<div style="position:absolute;left:1334px;top:721px;width:22px;height:23px;background:#cce8ff;box-sizing:border-box;border:1px solid #4196d6"></div>
<div style="position:absolute;left:1340px;top:728px;width:12px;height:9px;background:transparent;box-sizing:border-box;border:1px solid #000"></div>
<div style="position:absolute;left:1340px;top:738px;width:12px;height:1px;background:#000;"></div>
<div style="position:absolute;left:0px;top:744px;width:1360px;height:24px;background:#f0f0f0;box-sizing:border-box;border-top:1px solid #dadada"></div>
<div class="t" style="left:2.00px;top:747px;font-size:11.55px;line-height:20px;color:#000;letter-spacing:-0.045px;">Item type: Image (jpg) File, Date taken: 7/3/2018 5:39 PM, Dimensions: 7709 x 6554, Size: 3.82 MB</div>
<div style="position:absolute;left:1120px;top:747px;width:1px;height:19px;background:#d9d9d9;"></div>
<div class="t" style="left:1124.70px;top:747px;font-size:11.55px;line-height:20px;color:#000;letter-spacing:-0.252px;">3.82 MB</div>
<div style="position:absolute;left:1208px;top:747px;width:1px;height:19px;background:#d9d9d9;"></div>
<svg style="position:absolute;left:1212px;top:749px;" width="17" height="15" viewBox="0 0 17 15"><defs><linearGradient id="gMon" x1="0" y1="0" x2="1" y2="1"><stop offset="0" stop-color="#5fd0f5"/><stop offset="1" stop-color="#1184d4"/></linearGradient></defs><rect x="0.5" y="0.5" width="16" height="11" rx="1" fill="url(#gMon)" stroke="#1a6fb0" stroke-width="0.8"/><rect x="7" y="12" width="3" height="2" fill="#8aa"/><rect x="4" y="14" width="9" height="1" fill="#8aa"/></svg>
<div class="t" style="left:1233.00px;top:747px;font-size:12.07px;line-height:20px;color:#000;">Computer</div>
<div style="position:absolute;left:1353px;top:757px;width:2px;height:2px;background:#bdbdbd;"></div>
<div style="position:absolute;left:1350px;top:760px;width:2px;height:2px;background:#bdbdbd;"></div>
<div style="position:absolute;left:1353px;top:760px;width:2px;height:2px;background:#bdbdbd;"></div>
<div style="position:absolute;left:1347px;top:763px;width:2px;height:2px;background:#bdbdbd;"></div>
<div style="position:absolute;left:1350px;top:763px;width:2px;height:2px;background:#bdbdbd;"></div>
<div style="position:absolute;left:1353px;top:763px;width:2px;height:2px;background:#bdbdbd;"></div>
<div style="position:absolute;left:966px;top:115px;width:4px;height:657px;background:linear-gradient(90deg,rgba(0,0,0,0.42),rgba(0,0,0,0.12) 60%,rgba(0,0,0,0));"></div>
<div style="position:absolute;left:756px;top:111px;width:0px;height:0px;background:transparent;"></div>
<div style="position:absolute;left:752px;top:111px;width:214px;height:659px;background:#f0f0f0;box-sizing:border-box;border:1px solid #979797;"></div>
<div style="position:absolute;left:755px;top:473px;width:208px;height:19px;background:#0078d7;"></div>
<div class="t" style="left:774.30px;top:113px;font-size:11.66px;line-height:20px;color:#000;font-weight:700;">Open</div>
<div class="t" style="left:774.30px;top:132px;font-size:11.96px;line-height:20px;color:#000;">Add Watermark</div>
<div class="t" style="left:774.30px;top:151px;font-size:11.65px;line-height:20px;color:#000;">Set as desktop background</div>
<div class="t" style="left:774.30px;top:170px;font-size:12.01px;line-height:20px;color:#000;">Print</div>
<div style="position:absolute;left:756px;top:193px;width:206px;height:1px;background:#a0a0a0;"></div>
<div style="position:absolute;left:756px;top:194px;width:206px;height:1px;background:#ffffff;"></div>
<div class="t" style="left:774.30px;top:198px;font-size:11.94px;line-height:20px;color:#000;">Rotate right</div>
<div class="t" style="left:774.30px;top:217px;font-size:11.76px;line-height:20px;color:#000;">Rotate left</div>
<div style="position:absolute;left:756px;top:240px;width:206px;height:1px;background:#a0a0a0;"></div>
<div style="position:absolute;left:756px;top:241px;width:206px;height:1px;background:#ffffff;"></div>
<div class="t" style="left:774.30px;top:245px;font-size:11.55px;line-height:20px;color:#000;letter-spacing:-0.015px;">Cast to Device</div>
<svg style="position:absolute;left:952px;top:251px;" width="4" height="7" viewBox="0 0 4 7"><path d="M0,0 L4,3.5 L0,7 Z" fill="#000"/></svg>
<div class="t" style="left:774.30px;top:264px;font-size:11.99px;line-height:20px;color:#000;">Convert with Honeyview(2)</div>
<div style="position:absolute;left:756px;top:391px;width:206px;height:1px;background:#a0a0a0;"></div>
<div style="position:absolute;left:756px;top:392px;width:206px;height:1px;background:#ffffff;"></div>
<div class="t" style="left:774.30px;top:396px;font-size:12.03px;line-height:20px;color:#000;">7-Zip</div>
<svg style="position:absolute;left:952px;top:402px;" width="4" height="7" viewBox="0 0 4 7"><path d="M0,0 L4,3.5 L0,7 Z" fill="#000"/></svg>
<div class="t" style="left:774.30px;top:415px;font-size:11.55px;line-height:20px;color:#000;letter-spacing:-0.58px;">CRC SHA</div>
<svg style="position:absolute;left:952px;top:421px;" width="4" height="7" viewBox="0 0 4 7"><path d="M0,0 L4,3.5 L0,7 Z" fill="#000"/></svg>
<div class="t" style="left:774.30px;top:434px;font-size:11.55px;line-height:20px;color:#000;letter-spacing:-0.045px;">Bulk Rename Here</div>
<div class="t" style="left:774.30px;top:453px;font-size:11.87px;line-height:20px;color:#000;">Scan with Microsoft Defender...</div>
<div class="t" style="left:774.30px;top:472px;font-size:11.55px;line-height:20px;color:#fff;letter-spacing:-0.154px;">Resize pictures</div>
<div class="t" style="left:774.30px;top:491px;font-size:12.06px;line-height:20px;color:#000;">Open with</div>
<svg style="position:absolute;left:952px;top:497px;" width="4" height="7" viewBox="0 0 4 7"><path d="M0,0 L4,3.5 L0,7 Z" fill="#000"/></svg>
<div style="position:absolute;left:756px;top:514px;width:206px;height:1px;background:#a0a0a0;"></div>
<div style="position:absolute;left:756px;top:515px;width:206px;height:1px;background:#ffffff;"></div>
<div class="t" style="left:774.30px;top:519px;font-size:11.55px;line-height:20px;color:#000;letter-spacing:-0.188px;">Give access to</div>
<svg style="position:absolute;left:952px;top:525px;" width="4" height="7" viewBox="0 0 4 7"><path d="M0,0 L4,3.5 L0,7 Z" fill="#000"/></svg>
<div class="t" style="left:774.30px;top:538px;font-size:11.57px;line-height:20px;color:#000;">Copy as path</div>
<div class="t" style="left:774.30px;top:557px;font-size:11.55px;line-height:20px;color:#000;letter-spacing:-0.505px;">Share</div>
<div class="t" style="left:774.30px;top:576px;font-size:11.55px;line-height:20px;color:#000;letter-spacing:-0.026px;">Restore previous versions</div>
<div style="position:absolute;left:756px;top:599px;width:206px;height:1px;background:#a0a0a0;"></div>
<div style="position:absolute;left:756px;top:600px;width:206px;height:1px;background:#ffffff;"></div>
<div class="t" style="left:774.30px;top:604px;font-size:11.55px;line-height:20px;color:#000;letter-spacing:-0.136px;">Send to</div>
<svg style="position:absolute;left:952px;top:610px;" width="4" height="7" viewBox="0 0 4 7"><path d="M0,0 L4,3.5 L0,7 Z" fill="#000"/></svg>
<div style="position:absolute;left:756px;top:627px;width:206px;height:1px;background:#a0a0a0;"></div>
<div style="position:absolute;left:756px;top:628px;width:206px;height:1px;background:#ffffff;"></div>
<div class="t" style="left:774.30px;top:632px;font-size:11.82px;line-height:20px;color:#000;">Cut</div>
<div class="t" style="left:774.30px;top:651px;font-size:11.74px;line-height:20px;color:#000;">Copy</div>
<div style="position:absolute;left:756px;top:674px;width:206px;height:1px;background:#a0a0a0;"></div>
<div style="position:absolute;left:756px;top:675px;width:206px;height:1px;background:#ffffff;"></div>
<div class="t" style="left:774.30px;top:679px;font-size:11.81px;line-height:20px;color:#000;">Create shortcut</div>
<div class="t" style="left:774.30px;top:698px;font-size:11.55px;line-height:20px;color:#000;letter-spacing:-0.117px;">Delete</div>
<div class="t" style="left:774.30px;top:717px;font-size:11.55px;line-height:20px;color:#000;letter-spacing:-0.191px;">Rename</div>
<div style="position:absolute;left:756px;top:740px;width:206px;height:1px;background:#a0a0a0;"></div>
<div style="position:absolute;left:756px;top:741px;width:206px;height:1px;background:#ffffff;"></div>
<div class="t" style="left:774.30px;top:745px;font-size:11.55px;line-height:20px;color:#000;letter-spacing:-0.015px;">Properties</div>
<svg style="position:absolute;left:757px;top:267px;" width="15" height="15" viewBox="0 0 15 15"><path d="M7.5,0.5 L11,4 L7.5,7.5 L4,4 Z" fill="#f5b335"/><path d="M11,4 L14.5,7.5 L11,11 L7.5,7.5 Z" fill="#9a9a9a"/><path d="M4,4 L7.5,7.5 L4,11 L0.5,7.5 Z" fill="#3da1e6"/><path d="M7.5,7.5 L11,11 L7.5,14.5 L4,11 Z" fill="#5ec545"/></svg>
<svg style="position:absolute;left:800px;top:286px;" width="115" height="98" viewBox="0 0 115 98"><use href="#soldier" width="115" height="98"/></svg>
<svg style="position:absolute;left:757px;top:288px;" width="15" height="15" viewBox="0 0 15 15"><path d="M7.5,0.5 L11,4 L7.5,7.5 L4,4 Z" fill="#f5b335"/><path d="M11,4 L14.5,7.5 L11,11 L7.5,7.5 Z" fill="#9a9a9a"/><path d="M4,4 L7.5,7.5 L4,11 L0.5,7.5 Z" fill="#3da1e6"/><path d="M7.5,7.5 L11,11 L7.5,14.5 L4,11 Z" fill="#5ec545"/></svg>
<div class="t" style="left:774.30px;top:286px;font-size:11.94px;line-height:20px;color:#fff;-webkit-text-stroke:1.8px #fff">View with Honeyview(3)</div>
<div class="t" style="left:774.30px;top:286px;font-size:11.94px;line-height:20px;color:#000;">View with Honeyview(3)</div>
<svg style="position:absolute;left:758px;top:437px;" width="14" height="16" viewBox="0 0 14 16"><path d="M2.5,0.5 H9 L12.5,4 V14.5 H2.5 Z" fill="#e6eaf4" stroke="#a3a8b2" stroke-width="1"/><path d="M9,0.5 V4 H12.5" fill="#fff" stroke="#a3a8b2" stroke-width="0.8"/><path d="M3.8,11.5 L6.8,2.2 H8 L11,11.5" fill="none" stroke="#101a45" stroke-width="1.9"/><path d="M5,8.6 H9.6" stroke="#101a45" stroke-width="1.5"/><path d="M0.3,9.5 L7.5,12.2 L0.3,15 Z" fill="#93c864" stroke="#5d8f3a" stroke-width="0.7"/></svg>
<svg style="position:absolute;left:758px;top:456px;" width="13" height="15" viewBox="0 0 13 15"><defs><linearGradient id="gDef" x1="0" y1="0" x2="0" y2="1"><stop offset="0" stop-color="#2ea7ee"/><stop offset="0.45" stop-color="#1b8ae0"/><stop offset="0.5" stop-color="#1377d2"/><stop offset="1" stop-color="#0b56b0"/></linearGradient></defs><path d="M6.5,0.2 L12.8,2.8 V9.2 L6.5,15 L0.2,9.2 V2.8 Z" fill="url(#gDef)"/></svg>
<svg style="position:absolute;left:757px;top:558px;" width="16" height="14" viewBox="0 0 16 14"><path d="M5,4.5 H1 V13 H12 V10" fill="none" stroke="#333" stroke-width="1"/><path d="M3.5,10 Q4.5,4.5 10,4.5 V1.5 L15,5.5 L10,9.5 V7 Q6,7 3.5,10 Z" fill="none" stroke="#333" stroke-width="1" stroke-linejoin="round"/></svg>
</body></html>
